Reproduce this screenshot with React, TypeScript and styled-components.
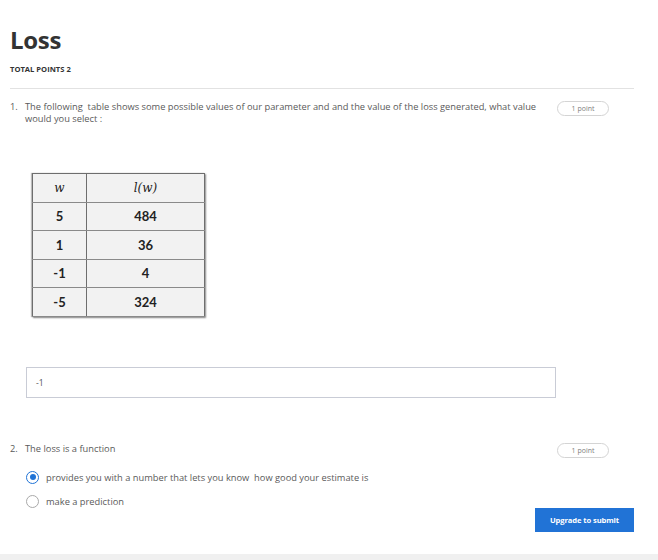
import React from "react";
import styled, { createGlobalStyle } from "styled-components";

const Global = createGlobalStyle`
  html, body { margin: 0; padding: 0; background: #fff; }
  body { font-family: "Open Sans", "Liberation Sans", sans-serif; color: #444; }
  * { box-sizing: border-box; }
`;

const Page = styled.div`
  padding: 25px 24px 0 10px;
`;

const Title = styled.h1`
  margin: 0;
  font-size: 24px;
  line-height: 30px;
  font-weight: 700;
  color: #333;
  letter-spacing: -0.3px;
`;

const TotalPoints = styled.div`
  margin-top: 9px;
  font-size: 7.6px;
  line-height: 10px;
  font-weight: 700;
  color: #333;
`;

const Divider = styled.hr`
  margin: 14px 0 0 0;
  border: 0;
  border-top: 1px solid #e2e2e2;
`;

const Question = styled.section<{ $top: number }>`
  margin-top: ${(p) => p.$top}px;
`;

const QuestionRow = styled.div`
  display: flex;
  align-items: flex-start;
`;

const Num = styled.div`
  width: 15px;
  font-size: 9.3px;
  line-height: 12px;
  color: #5a5a5a;
`;

const QText = styled.div`
  flex: 1;
  font-size: 9.3px;
  line-height: 12px;
  color: #5a5a5a;
`;

const Pill = styled.div`
  flex: none;
  margin-left: 12px;
  margin-right: 25px;
  width: 52px;
  height: 15px;
  border: 1px solid #d4d4d4;
  border-radius: 8px;
  font-size: 7px;
  line-height: 13px;
  text-align: center;
  color: #808080;
`;

const Body = styled.div`
  padding-left: 15px;
`;

const Table = styled.table`
  margin: 48px 0 0 7px;
  border-collapse: collapse;
  background: #f2f2f2;
  box-shadow: 1px 1px 1.5px rgba(0, 0, 0, 0.45), -1px 0 1px rgba(0, 0, 0, 0.25);
  border: 1.5px solid #6e6e6e;
`;

const Cell = styled.td<{ $w: number; $head?: boolean }>`
  width: ${(p) => p.$w}px;
  height: 28.5px;
  padding: 0;
  border: 1px solid #6e6e6e;
  border-bottom-color: #8a8a8a;
  text-align: center;
  font-family: ${(p) => (p.$head ? '"DejaVu Serif", "Liberation Serif", serif' : 'Lato, "Open Sans", sans-serif')};
  font-style: ${(p) => (p.$head ? "italic" : "normal")};
  font-weight: ${(p) => (p.$head ? 400 : 700)};
  font-size: ${(p) => (p.$head ? 12 : 13)}px;
  color: #222;
`;

const Input = styled.div`
  margin: 50px 0 0 1px;
  width: 530px;
  height: 31px;
  border: 1px solid #c9ccd6;
  padding: 0 9px;
  display: flex;
  align-items: center;
  font-size: 8.5px;
  color: #555;
`;

const Options = styled.div`
  margin-top: 13px;
  display: flex;
  flex-direction: column;
  gap: 11px;
`;

const Option = styled.label`
  display: flex;
  align-items: center;
  gap: 7px;
  margin-left: 1px;
  font-size: 9.3px;
  line-height: 13px;
  color: #5a5a5a;
`;

const Radio = styled.span<{ $checked?: boolean }>`
  flex: none;
  width: 13px;
  height: 13px;
  border-radius: 50%;
  border: ${(p) => (p.$checked ? "1.5px solid #1f73d6" : "1px solid #a9a9a9")};
  display: flex;
  align-items: center;
  justify-content: center;
  &::after {
    content: "";
    width: 6px;
    height: 6px;
    border-radius: 50%;
    background: ${(p) => (p.$checked ? "#1f73d6" : "transparent")};
  }
`;

const Actions = styled.div`
  display: flex;
  justify-content: flex-end;
`;

const Button = styled.button`
  width: 99px;
  height: 24px;
  border: 0;
  background: #2173d6;
  color: #fff;
  font-family: "Open Sans", sans-serif;
  font-weight: 700;
  font-size: 7.6px;
  letter-spacing: -0.1px;
  padding: 0;
`;

const Footer = styled.div`
  margin-top: 22px;
  height: 30px;
  background: #f0f0f0;
`;

const rows: [string, string][] = [
  ["5", "484"],
  ["1", "36"],
  ["-1", "4"],
  ["-5", "324"],
];

export default function App() {
  return (
    <>
      <Global />
      <Page>
        <Title>Loss</Title>
        <TotalPoints>TOTAL POINTS 2</TotalPoints>
        <Divider />
        <Question $top={12}>
          <QuestionRow>
            <Num>1.</Num>
            <QText>
              The following&nbsp; table shows some possible values of our parameter and and the value of the loss generated, what value would you select :
            </QText>
            <Pill>1 point</Pill>
          </QuestionRow>
          <Body>
            <Table>
              <tbody>
                <tr>
                  <Cell $w={54} $head>w</Cell>
                  <Cell $w={118} $head>l(w)</Cell>
                </tr>
                {rows.map(([a, b]) => (
                  <tr key={a}>
                    <Cell $w={54}>{a}</Cell>
                    <Cell $w={118}>{b}</Cell>
                  </tr>
                ))}
              </tbody>
            </Table>
            <Input>-1</Input>
          </Body>
        </Question>
        <Question $top={45}>
          <QuestionRow>
            <Num>2.</Num>
            <QText>The loss is a function</QText>
            <Pill>1 point</Pill>
          </QuestionRow>
          <Body>
            <Options>
              <Option>
                <Radio $checked />
                provides you with a number that lets you know&nbsp; how good your estimate is
              </Option>
              <Option>
                <Radio />
                make a prediction
              </Option>
            </Options>
          </Body>
          <Actions>
            <Button>Upgrade to submit</Button>
          </Actions>
        </Question>
      </Page>
      <Footer />
    </>
  );
}
